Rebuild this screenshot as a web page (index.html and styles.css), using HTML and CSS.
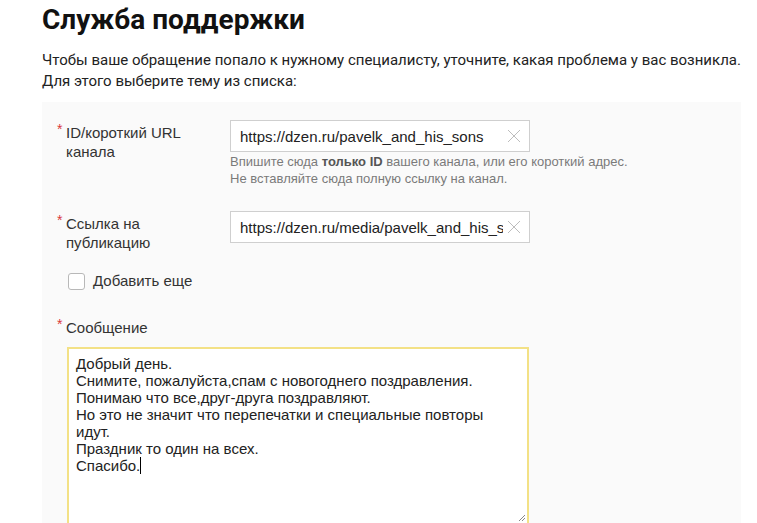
FILE: index.html
```html
<!DOCTYPE html>
<html lang="ru">
<head>
    <meta charset="UTF-8">
    <meta name="viewport" content="width=device-width, initial-scale=1.0">
    <title>Служба поддержки</title>
    <link rel="stylesheet" href="styles.css">
</head>
<body>

<div class="страница">
    <h1 class="заголовок">Служба поддержки</h1>
    <p class="описание">Чтобы ваше обращение попало к нужному специалисту, уточните, какая проблема у вас возникла.<br>Для этого выберите тему из списка:</p>

    <div class="форма">
        <div class="строка">
            <div class="метка"><span class="звезда">*</span><span class="метка-текст">ID/короткий URL канала</span></div>
            <div class="поле-блок">
                <div class="поле">
                    <input type="text" value="https://dzen.ru/pavelk_and_his_sons" readonly>
                    <svg class="очистить" width="14" height="14" viewBox="0 0 14 14"><path d="M1 1L13 13M13 1L1 13" stroke="#bdbdbd" stroke-width="1"/></svg>
                </div>
                <div class="подсказка">Впишите сюда <b>только ID</b> вашего канала, или его короткий адрес.<br>Не вставляйте сюда полную ссылку на канал.</div>
            </div>
        </div>

        <div class="строка">
            <div class="метка"><span class="звезда">*</span><span class="метка-текст">Ссылка на публикацию</span></div>
            <div class="поле-блок">
                <div class="поле">
                    <input type="text" value="https://dzen.ru/media/pavelk_and_his_sons" readonly>
                    <svg class="очистить" width="14" height="14" viewBox="0 0 14 14"><path d="M1 1L13 13M13 1L1 13" stroke="#bdbdbd" stroke-width="1"/></svg>
                </div>
            </div>
        </div>

        <label class="флажок"><span class="квадрат"></span>Добавить еще</label>

        <div class="метка сообщение-метка"><span class="звезда">*</span><span>Сообщение</span></div>
        <div class="сообщение">Добрый день.
Снимите, пожалуйста,спам с новогоднего поздравления.
Понимаю что все,друг-друга поздравляют.
Но это не значит что перепечатки и специальные повторы идут.
Праздник то один на всех.
Спасибо.<span class="курсор"></span>
            <svg class="ручка" width="8" height="8" viewBox="0 0 8 8"><path d="M7 1L1 7M7 4L4 7" stroke="#888" stroke-width="1"/></svg>
        </div>
    </div>
</div>

</body>
</html>
```

FILE: styles.css
```css
body {
    margin: 0;
    background: white;
    color: #222;
    overflow: hidden;
}

.страница {
    padding-left: 42px;
    width: 699px;
}

.заголовок {
    font-family: Roboto, sans-serif;
    font-weight: 700;
    font-size: 28px;
    line-height: 32px;
    margin: 4px 0 0 0;
    color: #111;
}

.описание {
    font-family: Roboto, sans-serif;
    font-size: 15px;
    line-height: 21px;
    color: #222;
    margin: 14px 0 0 0;
}

.форма {
    background: #fafafa;
    margin-top: 10px;
    padding: 18px 15px 0 15px;
    height: 403px;
    font-family: "Liberation Sans", Arial, sans-serif;
    font-size: 15px;
}

.строка {
    display: flex;
}

.строка + .строка {
    margin-top: 24px;
}

.метка {
    width: 173px;
    display: flex;
    padding-top: 3px;
    line-height: 19px;
    color: #333;
}

.метка-текст {
    width: 140px;
}

.звезда {
    color: #d9383a;
    font-size: 14px;
    line-height: 12px;
    width: 9px;
}

.поле {
    position: relative;
    width: 300px;
}

.поле input {
    box-sizing: border-box;
    width: 300px;
    height: 32px;
    border: 1px solid #cfcfcf;
    background: white;
    padding: 0 26px 0 9px;
    font-family: "Liberation Sans", Arial, sans-serif;
    font-size: 15px;
    color: #222;
    outline: none;
}

.очистить {
    position: absolute;
    right: 9px;
    top: 9px;
}

.подсказка {
    font-size: 13px;
    line-height: 17px;
    color: #7a7a7a;
    margin-top: 1px;
}

.подсказка b {
    color: #555;
}

.флажок {
    display: flex;
    align-items: center;
    gap: 8px;
    margin: 20px 0 0 11px;
    color: #333;
    line-height: 18px;
}

.квадрат {
    box-sizing: border-box;
    width: 17px;
    height: 17px;
    border: 1px solid #b8b8b8;
    border-radius: 3px;
    background: white;
}

.сообщение-метка {
    margin-top: 28px;
    padding-top: 0;
}

.сообщение {
    position: relative;
    box-sizing: border-box;
    width: 462px;
    height: 178px;
    margin: 10px 0 0 10px;
    border: 2px solid #f3e186;
    background: white;
    padding: 6px 7px;
    line-height: 17px;
    color: #222;
    white-space: pre-wrap;
}

.курсор {
    display: inline-block;
    width: 1px;
    height: 17px;
    background: #000;
    vertical-align: top;
}

.ручка {
    position: absolute;
    right: 1px;
    bottom: 1px;
}
```
